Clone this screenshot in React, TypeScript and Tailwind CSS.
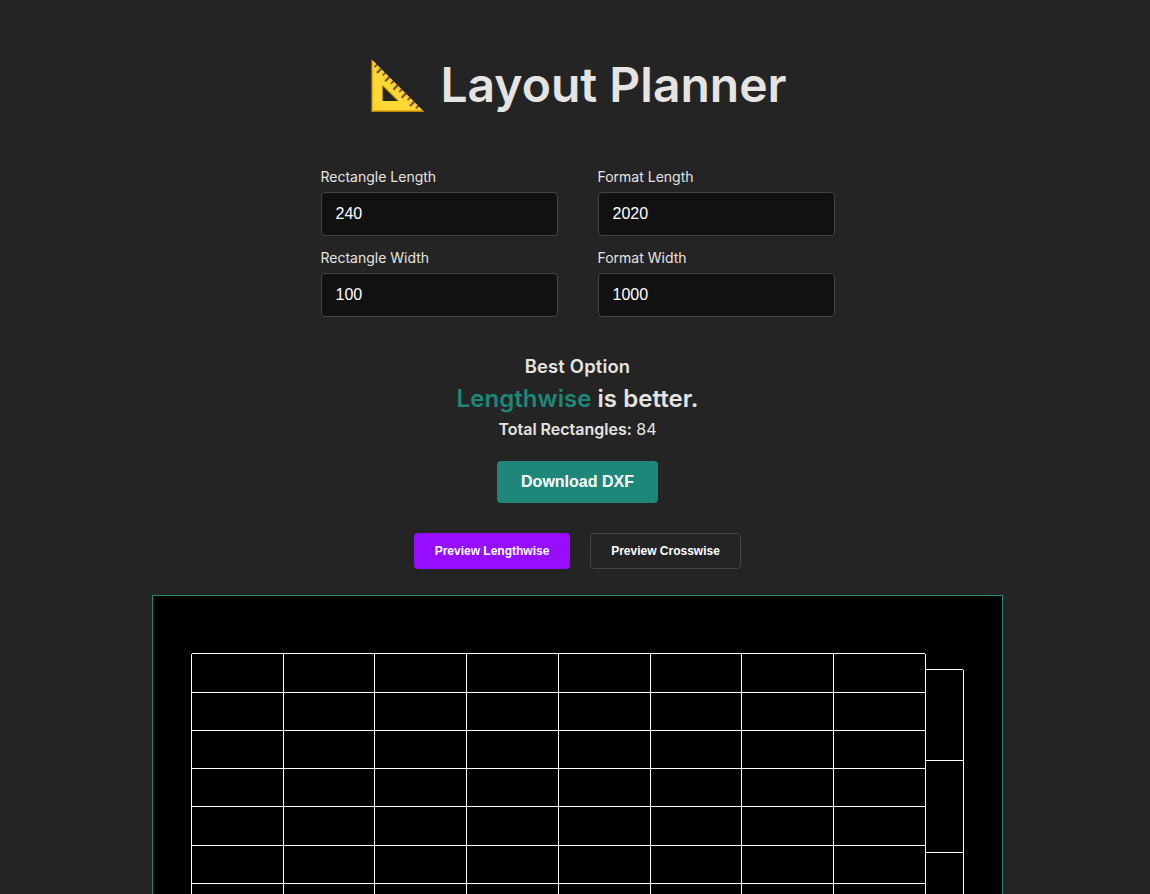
import { useState } from "react";

const input = "h-[44px] w-[237px] rounded border border-[#444444] bg-[#111111] px-[14px] font-['Liberation_Sans',sans-serif] text-base text-white outline-none";

function Field({ label, initial }: { label: string; initial: string }) {
  const [value, setValue] = useState(initial);
  return (
    <label className="flex flex-col text-sm leading-[21px]">
      <span className="mb-[5px]">{label}</span>
      <input className={input} value={value} onChange={(e) => setValue(e.target.value)} />
    </label>
  );
}

const columnLines = [191, 283, 374, 466, 558, 650, 741, 833, 925];
const rowLines = [653, 692, 730, 768, 806, 845, 883];
const sideLines = [669, 760, 852];

export default function App() {
  return (
    <div className="flex h-[894px] flex-col items-center overflow-hidden bg-[#242424] pl-[5px] font-[Inter,sans-serif] text-[#e5e4e2]">
      <h1 className="mt-[58px] flex h-[53px] items-center whitespace-pre text-5xl font-semibold leading-[53px]">📐 Layout Planner</h1>
      <div className="mt-[55px] grid grid-cols-2 gap-x-10 gap-y-[11px]">
        <Field label="Rectangle Length" initial="240" />
        <Field label="Format Length" initial="2020" />
        <Field label="Rectangle Width" initial="100" />
        <Field label="Format Width" initial="1000" />
      </div>
      <h3 className="mt-[35px] mb-px text-[18.4px] font-semibold leading-7 tracking-[0.18px]">Best Option</h3>
      <p className="text-2xl font-semibold leading-9 tracking-[0.04px]"><span className="text-[#1e877a]">Lengthwise</span> is better.</p>
      <p className="text-base leading-6"><strong className="font-semibold">Total Rectangles:</strong> 84</p>
      <button className="mt-5 h-[42px] w-[161px] shrink-0 rounded bg-[#1e877a] font-['Liberation_Sans',sans-serif] text-base font-bold text-white">Download DXF</button>
      <div className="mt-[30px] flex gap-5 font-['Liberation_Sans',sans-serif] text-xs font-bold text-white">
        <button className="h-9 w-[156px] rounded bg-[#960dff]">Preview Lengthwise</button>
        <button className="h-9 w-[151px] rounded border border-[#444444]">Preview Crosswise</button>
      </div>
      <div className="mt-[26px] w-[851px] shrink-0 border border-[#1e877a] bg-black">
        <svg width="849" height="483" viewBox="153 596 849 483" fill="white" shapeRendering="crispEdges">
          {columnLines.map((x) => <rect key={x} x={x} y="654" width="1" height="382" />)}
          {rowLines.map((y) => <rect key={y} x="192" y={y} width="733" height="1" />)}
          <rect x="963" y="670" width="1" height="367" />
          {sideLines.map((y) => <rect key={y} x="926" y={y} width="37" height="1" />)}
        </svg>
      </div>
    </div>
  );
}
